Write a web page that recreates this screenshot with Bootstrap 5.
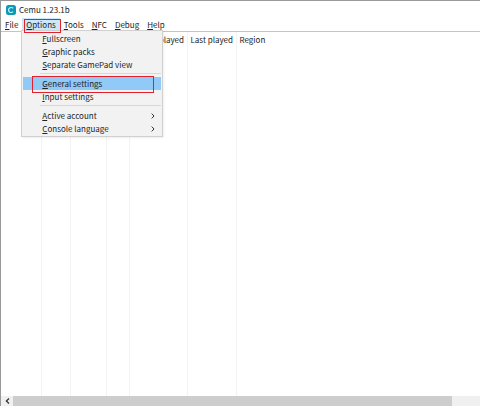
<!DOCTYPE html>
<html lang="en">
<head>
<meta charset="utf-8">
<meta name="viewport" content="width=device-width, initial-scale=1">
<title>Cemu 1.23.1b</title>
<link href="https://cdn.jsdelivr.net/npm/bootstrap@5.3.0/dist/css/bootstrap.min.css" rel="stylesheet">
<style>
body{font-family:"Noto Sans CJK SC","Open Sans",sans-serif;font-size:8px;line-height:13px;color:#222;background:#fff}
.window{border-top:1px solid #999;border-left:1px solid #999}
.title-bar{height:17px;padding-left:5px;gap:3px}
.menu-bar{height:14px;border-bottom:1px solid #c4c4c4}
.menu-bar .btn,.menu-item{font-size:inherit;line-height:13px;color:#222;border:0;border-radius:0;padding:0 4px}
.menu-bar .opened{background:#cce6fa}
.menu-pop{position:absolute;top:12px;left:-1px;width:142px;z-index:5;background:#f2f2f2;border:1px solid #d0d0d0;padding:1px;box-shadow:1px 1px 2px #0001}
.menu-pop .menu-item{display:flex;justify-content:space-between;align-items:center;width:100%;padding:0 6px 0 19px;background:none;text-align:left}
.menu-pop .chosen{background:#91c9f7}
.menu-pop hr{margin:2px 0 3px 17px;border-top:1px solid #d8d8d8;opacity:1}
.marked{position:relative}
.marked::after{content:"";position:absolute;border:1px solid #e0202c;pointer-events:none;z-index:6}
.marked-tab::after{inset:1px -1px -2px 2px}
.marked-row::after{inset:-1px 7px -3px 9px}
.games{table-layout:fixed;height:100%;width:100%;border-collapse:collapse}
.games th,.games td{border-right:1px solid #f3f3f3;padding:0 3px;font-weight:400;white-space:nowrap;overflow:hidden}
.games th:last-child,.games td:last-child{border-right:0}
.games thead tr{height:15px}
.w-first{width:40px}.w-icon{width:29px}.w-game{width:36px}.w-ver{width:23px}.w-played{width:58px}.w-last{width:49px}
.scroll-x{height:10px;background:#f0f0f0}
.scroll-x .btn{width:12px;line-height:0;border:0;border-radius:0}
.track{padding-right:28px}
.thumb{background:#cdcdcd}
</style>
<script src="https://cdn.jsdelivr.net/npm/bootstrap@5.3.0/dist/js/bootstrap.bundle.min.js"></script>
</head>
<body>
<div class="window d-flex flex-column vh-100 overflow-hidden">
  <header class="title-bar d-flex align-items-center">
    <svg width="10" height="10" viewBox="0 0 20 20" aria-hidden="true"><rect width="20" height="20" rx="5" fill="#0c99b8"/><path d="M14 6.8A5 5 0 1 0 14 13.2" fill="none" stroke="#c8f4fb" stroke-width="2.4"/></svg>
    <span>Cemu 1.23.1b</span>
  </header>
  <nav class="menu-bar d-flex" aria-label="Main">
    <button class="btn" type="button"><u>F</u>ile</button>
    <div class="position-relative">
      <button class="btn d-block opened marked marked-tab" type="button" aria-expanded="true"><u>O</u>ptions</button>
      <div class="menu-pop">
        <button class="menu-item" type="button"><span><u>F</u>ullscreen</span></button>
        <button class="menu-item" type="button"><span><u>G</u>raphic packs</span></button>
        <button class="menu-item" type="button"><span><u>S</u>eparate GamePad view</span></button>
        <hr>
        <button class="menu-item chosen marked marked-row" type="button"><span><u>G</u>eneral settings</span></button>
        <button class="menu-item" type="button"><span><u>I</u>nput settings</span></button>
        <hr>
        <button class="menu-item" type="button"><span><u>A</u>ctive account</span><svg width="4" height="6" viewBox="0 0 4 6" aria-hidden="true"><path d="M.7.6 3 3 .7 5.4" fill="none" stroke="#333"/></svg></button>
        <button class="menu-item" type="button"><span><u>C</u>onsole language</span><svg width="4" height="6" viewBox="0 0 4 6" aria-hidden="true"><path d="M.7.6 3 3 .7 5.4" fill="none" stroke="#333"/></svg></button>
      </div>
    </div>
    <button class="btn" type="button"><u>T</u>ools</button>
    <button class="btn" type="button"><u>N</u>FC</button>
    <button class="btn" type="button"><u>D</u>ebug</button>
    <button class="btn" type="button"><u>H</u>elp</button>
  </nav>
  <main class="flex-grow-1">
    <table class="games">
      <thead><tr><th class="w-first"></th><th class="w-icon"></th><th class="w-game"></th><th class="w-ver"></th><th class="w-played">You've played</th><th class="w-last">Last played</th><th>Region</th></tr></thead>
      <tbody><tr><td></td><td></td><td></td><td></td><td></td><td></td><td></td></tr></tbody>
    </table>
  </main>
  <div class="scroll-x d-flex">
    <button class="btn p-0" type="button" aria-label="Scroll left"><svg width="5" height="6" viewBox="0 0 5 6" aria-hidden="true"><path d="M4 .6 1.4 3 4 5.4" fill="none" stroke="#333" stroke-width="1.3"/></svg></button>
    <div class="track d-flex flex-grow-1"><div class="thumb flex-grow-1"></div></div>
  </div>
</div>
</body>
</html>
